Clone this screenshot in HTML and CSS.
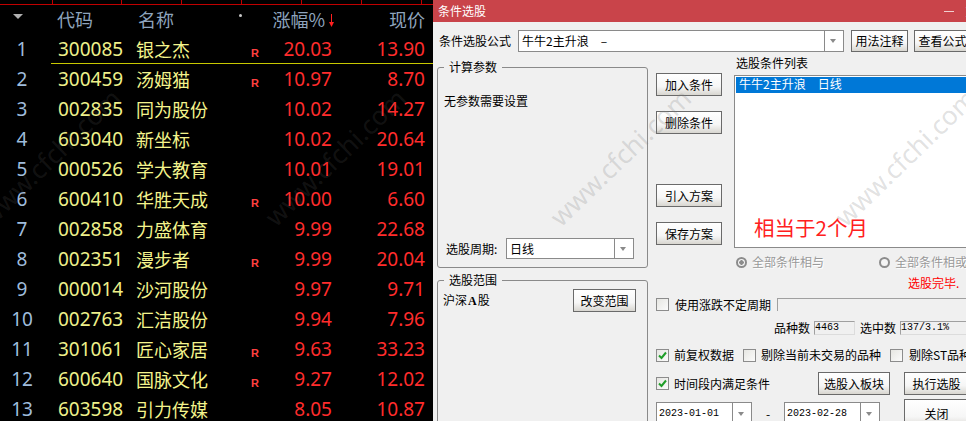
FILE: index.html
```html
<!DOCTYPE html>
<html lang="zh-CN">
  <head>
    <meta charset="UTF-8" />
    <title>条件选股</title>
    <link rel="stylesheet" href="styles.css">
  </head>
  <body>
    <div class="page">
      <!-- Quote list -->
      <div class="quotes">
        <div class="ticks">
          <i style="width: 53px"></i><i style="width: 69px"></i><i style="width: 60px"></i><i style="width: 60px"></i><i style="width: 60px"></i><i style="width: 60px"></i><i style="width: 60px"></i>
        </div>
        <div class="row head">
          <span class="idx"><b class="sort-mark"></b></span>
          <span class="code">代码</span>
          <span class="name">名称</span>
          <span class="flag"><b class="dot"></b></span>
          <span class="pct">涨幅%<svg class="arrow" width="7" height="15" viewBox="0 0 7 15"><path d="M3.5 1V11" stroke="#ff2020" stroke-width="1"/><path d="M1 9L6 9L3.5 14Z" fill="#ff2020"/></svg></span>
          <span class="price">现价</span>
        </div>
        <div class="row current"><span class="idx">1</span><span class="code">300085</span><span class="name">银之杰</span><span class="flag">R</span><span class="pct">20.03</span><span class="price">13.90</span></div>
        <div class="row"><span class="idx">2</span><span class="code">300459</span><span class="name">汤姆猫</span><span class="flag">R</span><span class="pct">10.97</span><span class="price">8.70</span></div>
        <div class="row"><span class="idx">3</span><span class="code">002835</span><span class="name">同为股份</span><span class="flag"></span><span class="pct">10.02</span><span class="price">14.27</span></div>
        <div class="row"><span class="idx">4</span><span class="code">603040</span><span class="name">新坐标</span><span class="flag"></span><span class="pct">10.02</span><span class="price">20.64</span></div>
        <div class="row"><span class="idx">5</span><span class="code">000526</span><span class="name">学大教育</span><span class="flag"></span><span class="pct">10.01</span><span class="price">19.01</span></div>
        <div class="row"><span class="idx">6</span><span class="code">600410</span><span class="name">华胜天成</span><span class="flag">R</span><span class="pct">10.00</span><span class="price">6.60</span></div>
        <div class="row"><span class="idx">7</span><span class="code">002858</span><span class="name">力盛体育</span><span class="flag"></span><span class="pct">9.99</span><span class="price">22.68</span></div>
        <div class="row"><span class="idx">8</span><span class="code">002351</span><span class="name">漫步者</span><span class="flag">R</span><span class="pct">9.99</span><span class="price">20.04</span></div>
        <div class="row"><span class="idx">9</span><span class="code">000014</span><span class="name">沙河股份</span><span class="flag"></span><span class="pct">9.97</span><span class="price">9.71</span></div>
        <div class="row"><span class="idx">10</span><span class="code">002763</span><span class="name">汇洁股份</span><span class="flag"></span><span class="pct">9.94</span><span class="price">7.96</span></div>
        <div class="row"><span class="idx">11</span><span class="code">301061</span><span class="name">匠心家居</span><span class="flag">R</span><span class="pct">9.63</span><span class="price">33.23</span></div>
        <div class="row"><span class="idx">12</span><span class="code">600640</span><span class="name">国脉文化</span><span class="flag">R</span><span class="pct">9.27</span><span class="price">12.02</span></div>
        <div class="row"><span class="idx">13</span><span class="code">603598</span><span class="name">引力传媒</span><span class="flag"></span><span class="pct">8.05</span><span class="price">10.87</span></div>
        <div class="mark mark-dim mark-quotes">www.cfchi.com</div>
        <div class="mark mark-dim mark-quotes2">www.cfchi.com</div>
      </div>

      <!-- Dialog -->
      <div class="dialog">
        <div class="title-bar">
          <span class="title-text">条件选股</span>
          <span class="min-btn"></span>
          <span class="close-btn">×</span>
        </div>

        <div class="formula-row">
          <label class="formula-label">条件选股公式</label>
          <div class="combo formula-combo"><span class="combo-text">牛牛2主升浪　–</span><span class="combo-arrow"></span></div>
          <button class="btn note-btn">用法注释</button>
          <button class="btn view-btn">查看公式</button>
        </div>

        <div class="main">
          <div class="left-col">
            <div class="group calc-group">
              <span class="legend">计算参数</span>
              <p class="no-params">无参数需要设置</p>
              <div class="period-row">
                <label>选股周期:</label>
                <div class="combo period-combo"><span class="combo-text">日线</span><span class="combo-arrow"></span></div>
              </div>
            </div>
            <div class="group range-group">
              <span class="legend">选股范围</span>
              <div class="range-row">
                <span class="range-text">沪深<b class="serif-a">A</b>股</span>
                <button class="btn range-btn">改变范围</button>
              </div>
            </div>
          </div>

          <div class="right-col">
            <div class="upper">
              <div class="side-buttons">
                <button class="btn side-btn">加入条件</button>
                <button class="btn side-btn">删除条件</button>
                <button class="btn side-btn far">引入方案</button>
                <button class="btn side-btn">保存方案</button>
              </div>
              <div class="list-col">
                <div class="list-title">选股条件列表</div>
                <div class="cond-list">
                  <div class="cond-item">牛牛2主升浪　日线</div>
                  <div class="cond-note">相当于2个月</div>
                </div>
                <div class="radio-row">
                  <span class="radio on"></span><span class="muted and-label">全部条件相与</span>
                  <span class="radio"></span><span class="muted">全部条件相或</span>
                </div>
                <div class="done">选股完毕.</div>
              </div>
            </div>

            <div class="opt-row period-opt">
              <span class="check"></span><span class="opt-text">使用涨跌不定周期</span>
              <span class="period-field"></span>
            </div>
            <div class="opt-row count-row">
              <span>品种数</span><span class="stat stat-total">4463</span>
              <span>选中数</span><span class="stat stat-hit">137/3.1%</span>
            </div>
            <div class="opt-row flags-row">
              <span class="check on"><svg width="11" height="11" viewBox="0 0 11 11"><path d="M2 5.5L4.5 8L9 2.5" fill="none" stroke="#1f9e28" stroke-width="2"/></svg></span><span class="opt-text adj-text">前复权数据</span>
              <span class="check"></span><span class="opt-text skip-text">剔除当前未交易的品种</span>
              <span class="check"></span><span class="opt-text">剔除ST品种</span>
            </div>
            <div class="opt-row action-row">
              <span class="check on"><svg width="11" height="11" viewBox="0 0 11 11"><path d="M2 5.5L4.5 8L9 2.5" fill="none" stroke="#1f9e28" stroke-width="2"/></svg></span><span class="opt-text time-text">时间段内满足条件</span>
              <button class="btn block-btn">选股入板块</button>
              <button class="btn run-btn">执行选股</button>
            </div>
            <div class="opt-row date-row">
              <div class="combo date-combo"><span class="combo-text">2023-01-01</span><span class="combo-arrow"></span></div>
              <span class="dash">-</span>
              <div class="combo date-combo"><span class="combo-text">2023-02-28</span><span class="combo-arrow"></span></div>
              <button class="btn close-dialog">关闭</button>
            </div>
          </div>
        </div>
        <div class="mark mark-dialog">www.cfchi.com</div>
        <div class="mark mark-dialog2">www.cfchi.com</div>
      </div>
    </div>
  </body>
</html>
```

FILE: styles.css
```css
body {
  margin: 0;
  padding: 0;
  background-color: #000;
  font-family: "Noto Sans CJK SC", "Liberation Sans", sans-serif;
}
.page {
  display: flex;
  width: 966px;
  height: 421px;
  overflow: hidden;
}

/* quote list */
.quotes {
  position: relative;
  flex: none;
  width: 433px;
  height: 421px;
  overflow: hidden;
  background-color: #000;
}
.ticks {
  display: flex;
  height: 4px;
  border-bottom: 1px solid #c00000;
}
.ticks i {
  display: block;
  box-sizing: border-box;
  border-right: 1px solid #c00000;
}
.row {
  position: relative;
  display: grid;
  grid-template-columns: 44px 92px 115px 10px 71px 93px;
  align-items: center;
  height: 30px;
  font-family: "Noto Sans", "Noto Sans CJK SC", sans-serif;
  font-size: 19px;
  line-height: 30px;
}
.row.head {
  height: 29px;
  line-height: 29px;
  color: #8ea4bd;
  font-family: "Noto Sans CJK SC", sans-serif;
  font-size: 18px;
}
.row.current::after {
  content: "";
  position: absolute;
  left: 51px;
  right: 0;
  bottom: 0;
  height: 1px;
  background-color: #c8c800;
}
.idx {
  color: #9fbcdc;
  text-align: center;
}
.code {
  padding-left: 14px;
  color: #eef08a;
}
.name {
  color: #f4f48c;
  font-family: "Noto Sans CJK SC", sans-serif;
  font-size: 18px;
}
.flag {
  margin-top: 8px;
  color: #ff4040;
  font-family: "Liberation Sans", sans-serif;
  font-size: 11px;
  font-weight: bold;
  line-height: 12px;
}
.pct,
.price {
  color: #ff2c2c;
  text-align: right;
}
.head .code,
.head .name,
.head .pct,
.head .price {
  color: #8ea4bd;
}
.head .code {
  padding-left: 13px;
}
.head .name {
  padding-left: 2px;
}
.head .pct {
  white-space: nowrap;
}
.arrow {
  margin-left: 3px;
  margin-right: -3px;
  vertical-align: -1px;
}
.sort-mark {
  display: inline-block;
  border-left: 5px solid transparent;
  border-right: 5px solid transparent;
  border-top: 5px solid #b0b0b0;
  margin: 0 8px 8px 0;
}
.dot {
  display: block;
  width: 3px;
  height: 3px;
  margin: 0 0 16px -12px;
  border-radius: 50%;
  background-color: #c8c8c8;
}

/* dialog */
.dialog {
  position: relative;
  flex: none;
  width: 533px;
  height: 421px;
  overflow: hidden;
  background-color: #f0f0f0;
  color: #000;
  font-size: 12px;
  line-height: 14px;
}
.title-bar {
  display: flex;
  align-items: center;
  height: 22px;
  padding-left: 5px;
  background-color: #c9444a;
  color: #fff;
  white-space: nowrap;
}
.title-text {
  flex: none;
  width: 48px;
}
.min-btn {
  flex: none;
  width: 10px;
  height: 1px;
  margin-left: 458px;
  background-color: #f0d0d0;
}
.close-btn {
  flex: none;
  margin-left: 9px;
  font-size: 16px;
  color: #f0d0d0;
}
.formula-row {
  display: flex;
  align-items: center;
  height: 22px;
  margin-top: 8px;
  padding-left: 6px;
}
.formula-label {
  width: 79px;
  flex: none;
}
.combo {
  display: flex;
  box-sizing: border-box;
  flex: none;
  border: 1px solid #8a8a8a;
  background-color: #fff;
}
.combo-text {
  flex: 1;
  padding-left: 3px;
  white-space: nowrap;
  align-self: center;
}
.combo-arrow {
  position: relative;
  flex: none;
  width: 18px;
  border-left: 1px solid #8a8a8a;
}
.combo-arrow::after {
  content: "";
  position: absolute;
  left: 5px;
  top: 50%;
  margin-top: -2px;
  border-left: 3.5px solid transparent;
  border-right: 3.5px solid transparent;
  border-top: 4px solid #8a8a8a;
}
.formula-combo {
  width: 326px;
  height: 22px;
}
.btn {
  display: block;
  box-sizing: border-box;
  flex: none;
  height: 23px;
  padding: 0;
  border: 1px solid #6a6a6a;
  background: linear-gradient(#ffffff 0%, #f6f6f6 60%, #d8d6d0 100%);
  color: #000;
  font-family: inherit;
  font-size: 12px;
  line-height: 14px;
  white-space: nowrap;
}
.note-btn {
  width: 57px;
  height: 22px;
  margin-left: 7px;
}
.view-btn {
  width: 57px;
  height: 22px;
  margin-left: 6px;
}
.main {
  display: flex;
  padding-left: 4px;
}
.left-col {
  flex: none;
  width: 211px;
}
.group {
  position: relative;
  box-sizing: border-box;
  border: 1px solid #8a8a8a;
  border-radius: 3px;
}
.legend {
  position: absolute;
  left: 6px;
  top: -8px;
  padding: 0 5px;
  background-color: #f0f0f0;
}
.calc-group {
  height: 201px;
  margin-top: 15px;
  padding: 26px 6px 0 6px;
}
.no-params {
  margin: 0;
}
.period-row {
  display: flex;
  align-items: center;
  margin-top: 130px;
  padding-left: 2px;
}
.period-row label {
  width: 60px;
  flex: none;
}
.period-combo {
  width: 128px;
  height: 21px;
}
.range-group {
  height: 160px;
  margin-top: 12px;
  padding: 8px 11px 0 5px;
}
.range-row {
  display: flex;
  justify-content: space-between;
  align-items: flex-start;
}
.range-text {
  margin-top: 4px;
}
.serif-a {
  margin: 0 1px;
  font-family: "Liberation Serif", serif;
}
.range-btn {
  width: 63px;
}
.right-col {
  flex: none;
  width: 310px;
  margin-left: 8px;
}
.upper {
  display: flex;
}
.side-buttons {
  flex: none;
  width: 66px;
  padding-top: 21px;
}
.side-btn {
  width: 66px;
  margin-bottom: 15px;
}
.side-btn.far {
  margin-top: 50px;
}
.list-col {
  flex: none;
  width: 232px;
  margin-left: 12px;
}
.list-title {
  height: 16px;
  margin-top: 3px;
  margin-bottom: 4px;
  padding-left: 2px;
  line-height: 16px;
}
.cond-list {
  box-sizing: border-box;
  height: 173px;
  margin-right: -4px;
  padding: 1px 0 0 1px;
  border: 1px solid #8a8a8a;
  background-color: #fff;
}
.cond-item {
  height: 16px;
  padding-left: 3px;
  background-color: #0078d7;
  color: #fff;
  line-height: 14px;
}
.cond-note {
  margin: 122px 0 0 18px;
  color: #ff2020;
  font-size: 20.5px;
  line-height: 24px;
}
.radio-row {
  display: flex;
  align-items: center;
  height: 14px;
  margin-top: 7px;
  padding-left: 2px;
  white-space: nowrap;
}
.radio {
  flex: none;
  box-sizing: border-box;
  width: 11px;
  height: 11px;
  border: 2px solid #8c8c8c;
  border-radius: 50%;
  background-color: #f4f4f4;
}
.radio.on {
  background: radial-gradient(circle, #8c8c8c 0 2px, #f4f4f4 2.5px);
}
.muted {
  flex: none;
  margin-left: 5px;
  color: #999;
  text-shadow: 1px 1px 0 #fff;
}
.and-label {
  margin-right: 55px;
}
.done {
  height: 14px;
  margin-top: 7px;
  margin-left: 174px;
  color: #ff0000;
  white-space: nowrap;
}
.opt-row {
  display: flex;
  align-items: center;
  white-space: nowrap;
}
.opt-row > * {
  flex: none;
}
.check {
  display: flex;
  align-items: center;
  justify-content: center;
  box-sizing: border-box;
  width: 13px;
  height: 13px;
  border: 1px solid #8c8c8c;
  background: linear-gradient(135deg, #e6e6e2, #fbfbfb);
}
.opt-text {
  margin-left: 6px;
}
.period-opt {
  height: 13px;
  margin-top: 8px;
}
.period-field {
  width: 200px;
  height: 13px;
  margin-left: 6px;
  border-top: 1px solid #a0a0a0;
  border-left: 1px solid #a0a0a0;
  box-sizing: border-box;
}
.count-row {
  height: 14px;
  margin-top: 10px;
  padding-left: 118px;
}
.stat {
  box-sizing: border-box;
  height: 14px;
  margin-left: 4px;
  margin-right: 5px;
  border: 1px solid #dcdcdc;
  border-top-color: #a0a0a0;
  border-left-color: #a0a0a0;
  font-family: "Liberation Mono", monospace;
  font-size: 10px;
  line-height: 12px;
}
.stat-total {
  width: 41px;
}
.stat-hit {
  width: 80px;
}
.flags-row {
  height: 14px;
  margin-top: 13px;
}
.adj-text {
  margin-left: 5px;
  width: 69px;
}
.skip-text {
  margin-left: 5px;
  width: 129px;
}
.action-row {
  height: 23px;
  margin-top: 10px;
}
.time-text {
  margin-left: 5px;
  width: 144px;
}
.block-btn {
  width: 72px;
}
.run-btn {
  width: 65px;
  margin-left: 14px;
}
.date-row {
  align-items: flex-start;
  margin-top: 4px;
}
.date-combo {
  width: 96px;
  height: 24px;
  margin-top: 3px;
}
.date-combo .combo-text {
  padding-left: 2px;
  font-family: "Liberation Mono", monospace;
  font-size: 10px;
}
.dash {
  width: 32px;
  margin-top: 8px;
  text-align: center;
}
.close-dialog {
  width: 65px;
  height: 30px;
  margin-left: 24px;
}

/* diagonal watermark */
.mark {
  position: absolute;
  top: 142px;
  color: rgba(128, 128, 128, 0.24);
  font-family: "Noto Sans", sans-serif;
  font-size: 26px;
  line-height: 30px;
  white-space: nowrap;
  transform: translateX(-50%) rotate(-44deg);
  pointer-events: none;
}
.mark-dim {
  color: rgba(128, 128, 128, 0.15);
}
.mark-quotes {
  left: 50px;
}
.mark-quotes2 {
  left: 335px;
}
.mark-dialog {
  left: 187px;
}
.mark-dialog2 {
  left: 472px;
}
```
